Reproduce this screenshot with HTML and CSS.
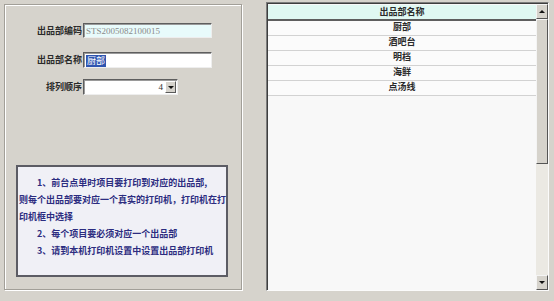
FILE: index.html
```html
<!DOCTYPE html>
<html lang="zh-CN">

<head>
    <meta charset="UTF-8">
    <title>出品部设置</title>
    <link rel="stylesheet" href="styles.css">
</head>

<body>
    <div class="window">
        <div class="panel">
            <div class="field field-code">
                <label>出品部编码</label>
                <div class="text-box readonly">STS2005082100015</div>
            </div>
            <div class="field field-name">
                <label>出品部名称</label>
                <div class="text-box"><span class="selected">厨部</span></div>
            </div>
            <div class="field field-order">
                <label>排列顺序</label>
                <div class="combo">
                    <span class="combo-value">4</span>
                    <span class="combo-btn"><i class="arrow-down"></i></span>
                </div>
            </div>
            <div class="notes">
                <p class="indent">1、前台点单时项目要打印到对应的出品部,<br>则每个出品部要对应一个真实的打印机，打印机在打<br>印机框中选择</p>
                <p class="indent">2、每个项目要必须对应一个出品部</p>
                <p class="indent">3、请到本机打印机设置中设置出品部打印机</p>
            </div>
        </div>

        <div class="grid">
            <div class="grid-body">
                <div class="grid-head">出品部名称</div>
                <div class="grid-row">厨部</div>
                <div class="grid-row">酒吧台</div>
                <div class="grid-row">明档</div>
                <div class="grid-row">海鲜</div>
                <div class="grid-row">点汤线</div>
            </div>
            <div class="scrollbar">
                <div class="scroll-btn"><i class="arrow-up"></i></div>
                <div class="scroll-thumb"></div>
                <div class="scroll-track"></div>
                <div class="scroll-btn"><i class="arrow-down"></i></div>
            </div>
        </div>
    </div>
</body>

</html>
```

FILE: styles.css
```css
body {
    margin: 0;
    padding: 0;
    background: #d6d3cc;
    font-family: "Noto Sans CJK SC", "Noto Sans", sans-serif;
    font-size: 9px;
    color: #1e1e1e;
}

.window {
    display: flex;
    align-items: flex-start;
    gap: 24px;
    padding: 2px 0 0 4px;
    height: 299px;
}

.panel {
    box-sizing: border-box;
    width: 238px;
    height: 286px;
    margin-top: 2px;
    padding-top: 18px;
    border: 1px solid #a29f98;
    box-shadow: inset 1px 1px 0 #fff, 1px 1px 0 #fff;
}

.field {
    display: flex;
    align-items: center;
}

.field label {
    width: 77px;
    margin-right: 1px;
    text-align: right;
    line-height: 12px;
    font-weight: bold;
    color: #2a2a2a;
}

.field-name {
    margin-top: 14px;
}

.field-order {
    margin-top: 11px;
}

.text-box {
    box-sizing: border-box;
    width: 129px;
    height: 16px;
    padding: 1px 2px 0;
    background: #fff;
    border: 1px solid;
    border-color: #5e5e5e #eeeeee #eeeeee #5e5e5e;
    box-shadow: inset 1px 1px 0 #9a9a9a;
    line-height: 13px;
}

.text-box.readonly {
    height: 15px;
    background: #e8fbfb;
    color: #8a8a8a;
    font-family: "Liberation Serif", serif;
    font-size: 9px;
    line-height: 12px;
}

.selected {
    display: inline-block;
    padding: 0 1px;
    background: #2f55b0;
    color: #fff;
    line-height: 12px;
}

.combo {
    box-sizing: border-box;
    display: flex;
    align-items: center;
    justify-content: flex-end;
    width: 95px;
    height: 16px;
    padding: 1px;
    background: #fff;
    border: 1px solid;
    border-color: #5e5e5e #eeeeee #eeeeee #5e5e5e;
    box-shadow: inset 1px 1px 0 #9a9a9a;
}

.combo-value {
    margin-right: 2px;
    font-family: "Liberation Serif", serif;
    color: #333;
}

.combo-btn {
    box-sizing: border-box;
    display: flex;
    align-items: center;
    justify-content: center;
    width: 11px;
    height: 12px;
    background: #d6d3cc;
    border: 1px solid;
    border-color: #fff #5a5a5a #5a5a5a #fff;
}

.arrow-down,
.arrow-up {
    display: block;
    width: 0;
    height: 0;
    border-left: 3px solid transparent;
    border-right: 3px solid transparent;
}

.arrow-down {
    border-top: 3px solid #111;
}

.arrow-up {
    border-bottom: 3px solid #111;
}

.notes {
    box-sizing: border-box;
    width: 212px;
    height: 112px;
    margin: 70px 0 0 11px;
    padding: 7px 0 0 1px;
    background: #f0f0f6;
    border: 2px solid #5c5c64;
    color: #2c2c80;
    font-size: 9px;
    font-weight: bold;
    line-height: 17px;
}

.notes p {
    margin: 0;
}

.notes .indent {
    text-indent: 18px;
}

.grid {
    box-sizing: border-box;
    display: flex;
    width: 283px;
    height: 289px;
    border: 1px solid;
    border-color: #7c7c7c #fbfbfb #fbfbfb #7c7c7c;
    box-shadow: inset 1px 1px 0 #3e3e3e;
    padding: 1px 0 0 1px;
}

.grid-body {
    flex: 1;
    background: #f8f8f8;
}

.grid-head {
    height: 14px;
    margin-top: 1px;
    background: #e0f8f2;
    border-bottom: 2px solid #5e5e5e;
    text-align: center;
    line-height: 14px;
    font-weight: bold;
    color: #2a2a2a;
}

.grid-row {
    box-sizing: border-box;
    height: 15px;
    background: #fbfbfb;
    border-bottom: 1px solid #d2d2d2;
    text-align: center;
    line-height: 12px;
    font-weight: bold;
    color: #2a2a2a;
}

.scrollbar {
    display: flex;
    flex-direction: column;
    width: 12px;
    background: #ebe9e3;
}

.scroll-btn {
    box-sizing: border-box;
    display: flex;
    align-items: center;
    justify-content: center;
    height: 15px;
    background: #d6d3cc;
    border: 1px solid;
    border-color: #f4f4f4 #555 #555 #f4f4f4;
}

.scroll-thumb {
    box-sizing: border-box;
    height: 145px;
    background: #d6d3cc;
    border: 1px solid;
    border-color: #f4f4f4 #555 #555 #f4f4f4;
}

.scroll-track {
    flex: 1;
}
```
